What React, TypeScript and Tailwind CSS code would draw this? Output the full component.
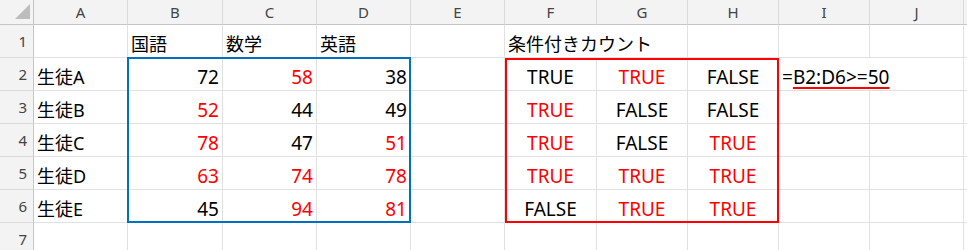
import type { ReactNode } from "react";

type CellValue = {
  text?: ReactNode;
  red?: boolean;
  align?: "left" | "right" | "center";
  spill?: boolean;
  latin?: boolean;
};

const columns = ["A", "B", "C", "D", "E", "F", "G", "H", "I", "J"];

const students = ["生徒A", "生徒B", "生徒C", "生徒D", "生徒E"];

// [value, red]
const scores: [number, boolean][][] = [
  [[72, false], [58, true], [38, false]],
  [[52, true], [44, false], [49, false]],
  [[78, true], [47, false], [51, true]],
  [[63, true], [74, true], [78, true]],
  [[45, false], [94, true], [81, true]],
];

const checks: [boolean, boolean][][] = [
  [[true, false], [true, true], [false, false]],
  [[true, true], [false, false], [false, false]],
  [[true, true], [false, false], [true, true]],
  [[true, true], [true, true], [true, true]],
  [[false, false], [true, true], [true, true]],
];

function buildRows(): CellValue[][] {
  const rows: CellValue[][] = [];

  rows.push([
    {},
    { text: "国語" },
    { text: "数学" },
    { text: "英語" },
    {},
    { text: "条件付きカウント", spill: true },
    {},
    {},
    {},
    {},
  ]);

  scores.forEach((row, i) => {
    const cells: CellValue[] = [{ text: students[i] }];
    row.forEach(([value, red]) => {
      cells.push({ text: String(value), align: "right", red, latin: true });
    });
    cells.push({});
    checks[i].forEach(([ok, red]) => {
      cells.push({
        text: ok ? "TRUE" : "FALSE",
        align: "center",
        red,
        latin: true,
      });
    });
    if (i === 0) {
      cells.push({
        text: (
          <>
            =
            <span className="underline decoration-[#ff0000] decoration-2 underline-offset-[3px]">
              B2:D6&gt;=50
            </span>
          </>
        ),
        spill: true,
        latin: true,
      });
    } else {
      cells.push({});
    }
    cells.push({});
    rows.push(cells);
  });

  rows.push(Array.from({ length: 10 }, () => ({})));
  return rows;
}

function Cell({ cell, noRight }: { cell: CellValue; noRight: boolean }) {
  const align =
    cell.align === "right"
      ? "justify-end"
      : cell.align === "center"
        ? "justify-center"
        : "justify-start";

  return (
    <div
      className={`relative flex h-[33px] items-end border-b border-[#e1e1e1] px-[3px] pb-[1px] ${align} ${
        noRight ? "" : "border-r"
      }`}
    >
      {cell.text !== undefined && (
        <span
          className={`z-10 whitespace-nowrap leading-[24px] ${
            cell.latin ? "text-[19px]" : "text-[18px]"
          } ${cell.red ? "text-[#ff0000]" : "text-black"}`}
        >
          {cell.text}
        </span>
      )}
    </div>
  );
}

export default function App() {
  const rows = buildRows();

  return (
    <div
      className="relative h-[250px] w-[967px] overflow-hidden bg-white"
      style={{ fontFamily: '"Noto Sans", "Noto Sans CJK JP", sans-serif' }}
    >
      <div className="grid grid-cols-[34px_94px_95px_94px_94px_94px_92px_91px_91px_91px_94px_1fr]">
        {/* header row */}
        <div className="relative h-[25px] border-b border-r border-[#c6c6c6] bg-[#f3f3f3]">
          <div className="absolute bottom-[5px] right-[3px] h-0 w-0 border-b-[15px] border-l-[15px] border-b-[#bdbdbd] border-l-transparent" />
        </div>
        {columns.map((c) => (
          <div
            key={c}
            className="flex h-[25px] items-center justify-center border-b border-r border-b-[#c6c6c6] border-r-[#dadada] bg-[#f3f3f3] text-[15px] text-[#444444]"
          >
            {c}
          </div>
        ))}
        <div className="h-[25px] border-b border-[#c6c6c6] bg-[#f3f3f3]" />

        {rows.map((row, r) => (
          <div key={r} className="contents">
            <div className="flex h-[33px] items-center justify-end border-b border-r border-b-[#dadada] border-r-[#c6c6c6] bg-[#f3f3f3] pr-[6px] text-[15px] text-[#444444]">
              {r + 1}
            </div>
            {row.map((cell, c) => (
              <Cell key={c} cell={cell} noRight={Boolean(cell.spill)} />
            ))}
            <div className="h-[33px] border-b border-[#e1e1e1]" />
          </div>
        ))}
      </div>

      {/* range borders */}
      <div className="pointer-events-none absolute left-[127px] top-[57px] h-[166px] w-[284px] border-2 border-[#0070c0]" />
      <div className="pointer-events-none absolute left-[505px] top-[58px] h-[165px] w-[274px] border-2 border-[#ff0000]" />
    </div>
  );
}
